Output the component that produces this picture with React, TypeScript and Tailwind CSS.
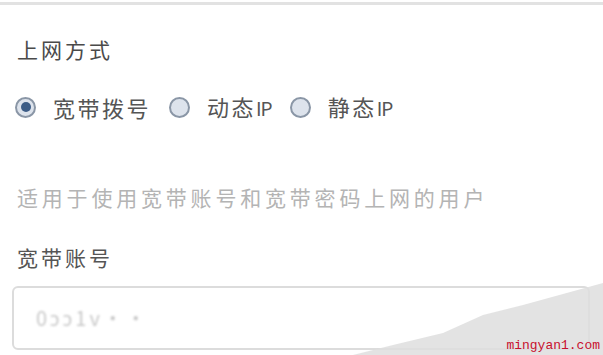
import React from "react";

const options = [
  { id: "pppoe", cn: "宽带拨号", en: "", checked: true },
  { id: "dhcp", cn: "动态", en: "IP", checked: false },
  { id: "static", cn: "静态", en: "IP", checked: false },
];

const Radio = ({ checked }: { checked: boolean }) => (
  <span className="flex h-[21px] w-[21px] shrink-0 items-center justify-center rounded-full border-2 border-[#8a96a6] bg-[#dde3ec]">
    {checked && <span className="h-[10px] w-[10px] rounded-full bg-[#3c5c86]" />}
  </span>
);

export default function App() {
  return (
    <div
      className="relative h-[355px] w-[603px] overflow-hidden bg-white"
      style={{ fontFamily: '"Noto Sans CJK SC", "Noto Sans", sans-serif' }}
    >
      {/* edge of previous card */}
      <div className="mt-[2px] h-[3px] w-full bg-[#e2e2e2]" />

      <div className="flex flex-col px-[17px]">
        <h3 className="mt-[29px] text-[21px] leading-[30px] tracking-[3px] text-[#4a4a4a]">
          上网方式
        </h3>

        {/* connection type */}
        <div className="-ml-[2px] mt-[27px] flex items-center">
          {options.map((o) => (
            <label key={o.id} className="mr-[18px] flex items-center gap-[17px]">
              <Radio checked={o.checked} />
              <span className="text-[22px] leading-[30px] tracking-[2.5px] text-[#555]">
                {o.cn}
                {o.en && <span className="text-[19px] tracking-[-1px]">{o.en}</span>}
              </span>
            </label>
          ))}
        </div>

        <p className="mt-[59px] text-[21px] leading-[30px] tracking-[3.8px] text-[#b4b4b4]">
          适用于使用宽带账号和宽带密码上网的用户
        </p>

        <h4 className="mt-[30px] text-[21px] leading-[30px] tracking-[3px] text-[#555]">
          宽带账号
        </h4>
      </div>

      {/* account input */}
      <div className="mx-[12px] mt-[14px] flex h-[64px] w-[578px] items-center rounded-[6px] border-2 border-[#dcdcdc] px-[22px]">
        <span className="text-[20px] tracking-[3px] text-[#c8c8c8] blur-[1px]">
          0ɔɔ1v··
        </span>
      </div>

      {/* smear in the corner */}
      <svg
        className="pointer-events-none absolute bottom-0 right-0"
        width="250"
        height="80"
        viewBox="0 0 250 80"
      >
        <polygon points="250,8 170,30 130,40 90,58 40,70 0,80 250,80" fill="#dedede" opacity="0.85" />
      </svg>

      <span
        className="absolute bottom-[3px] right-[3px] text-[13px] leading-none text-[#c8102e]"
        style={{ fontFamily: '"Liberation Mono", monospace' }}
      >
        mingyan1.com
      </span>
    </div>
  );
}
